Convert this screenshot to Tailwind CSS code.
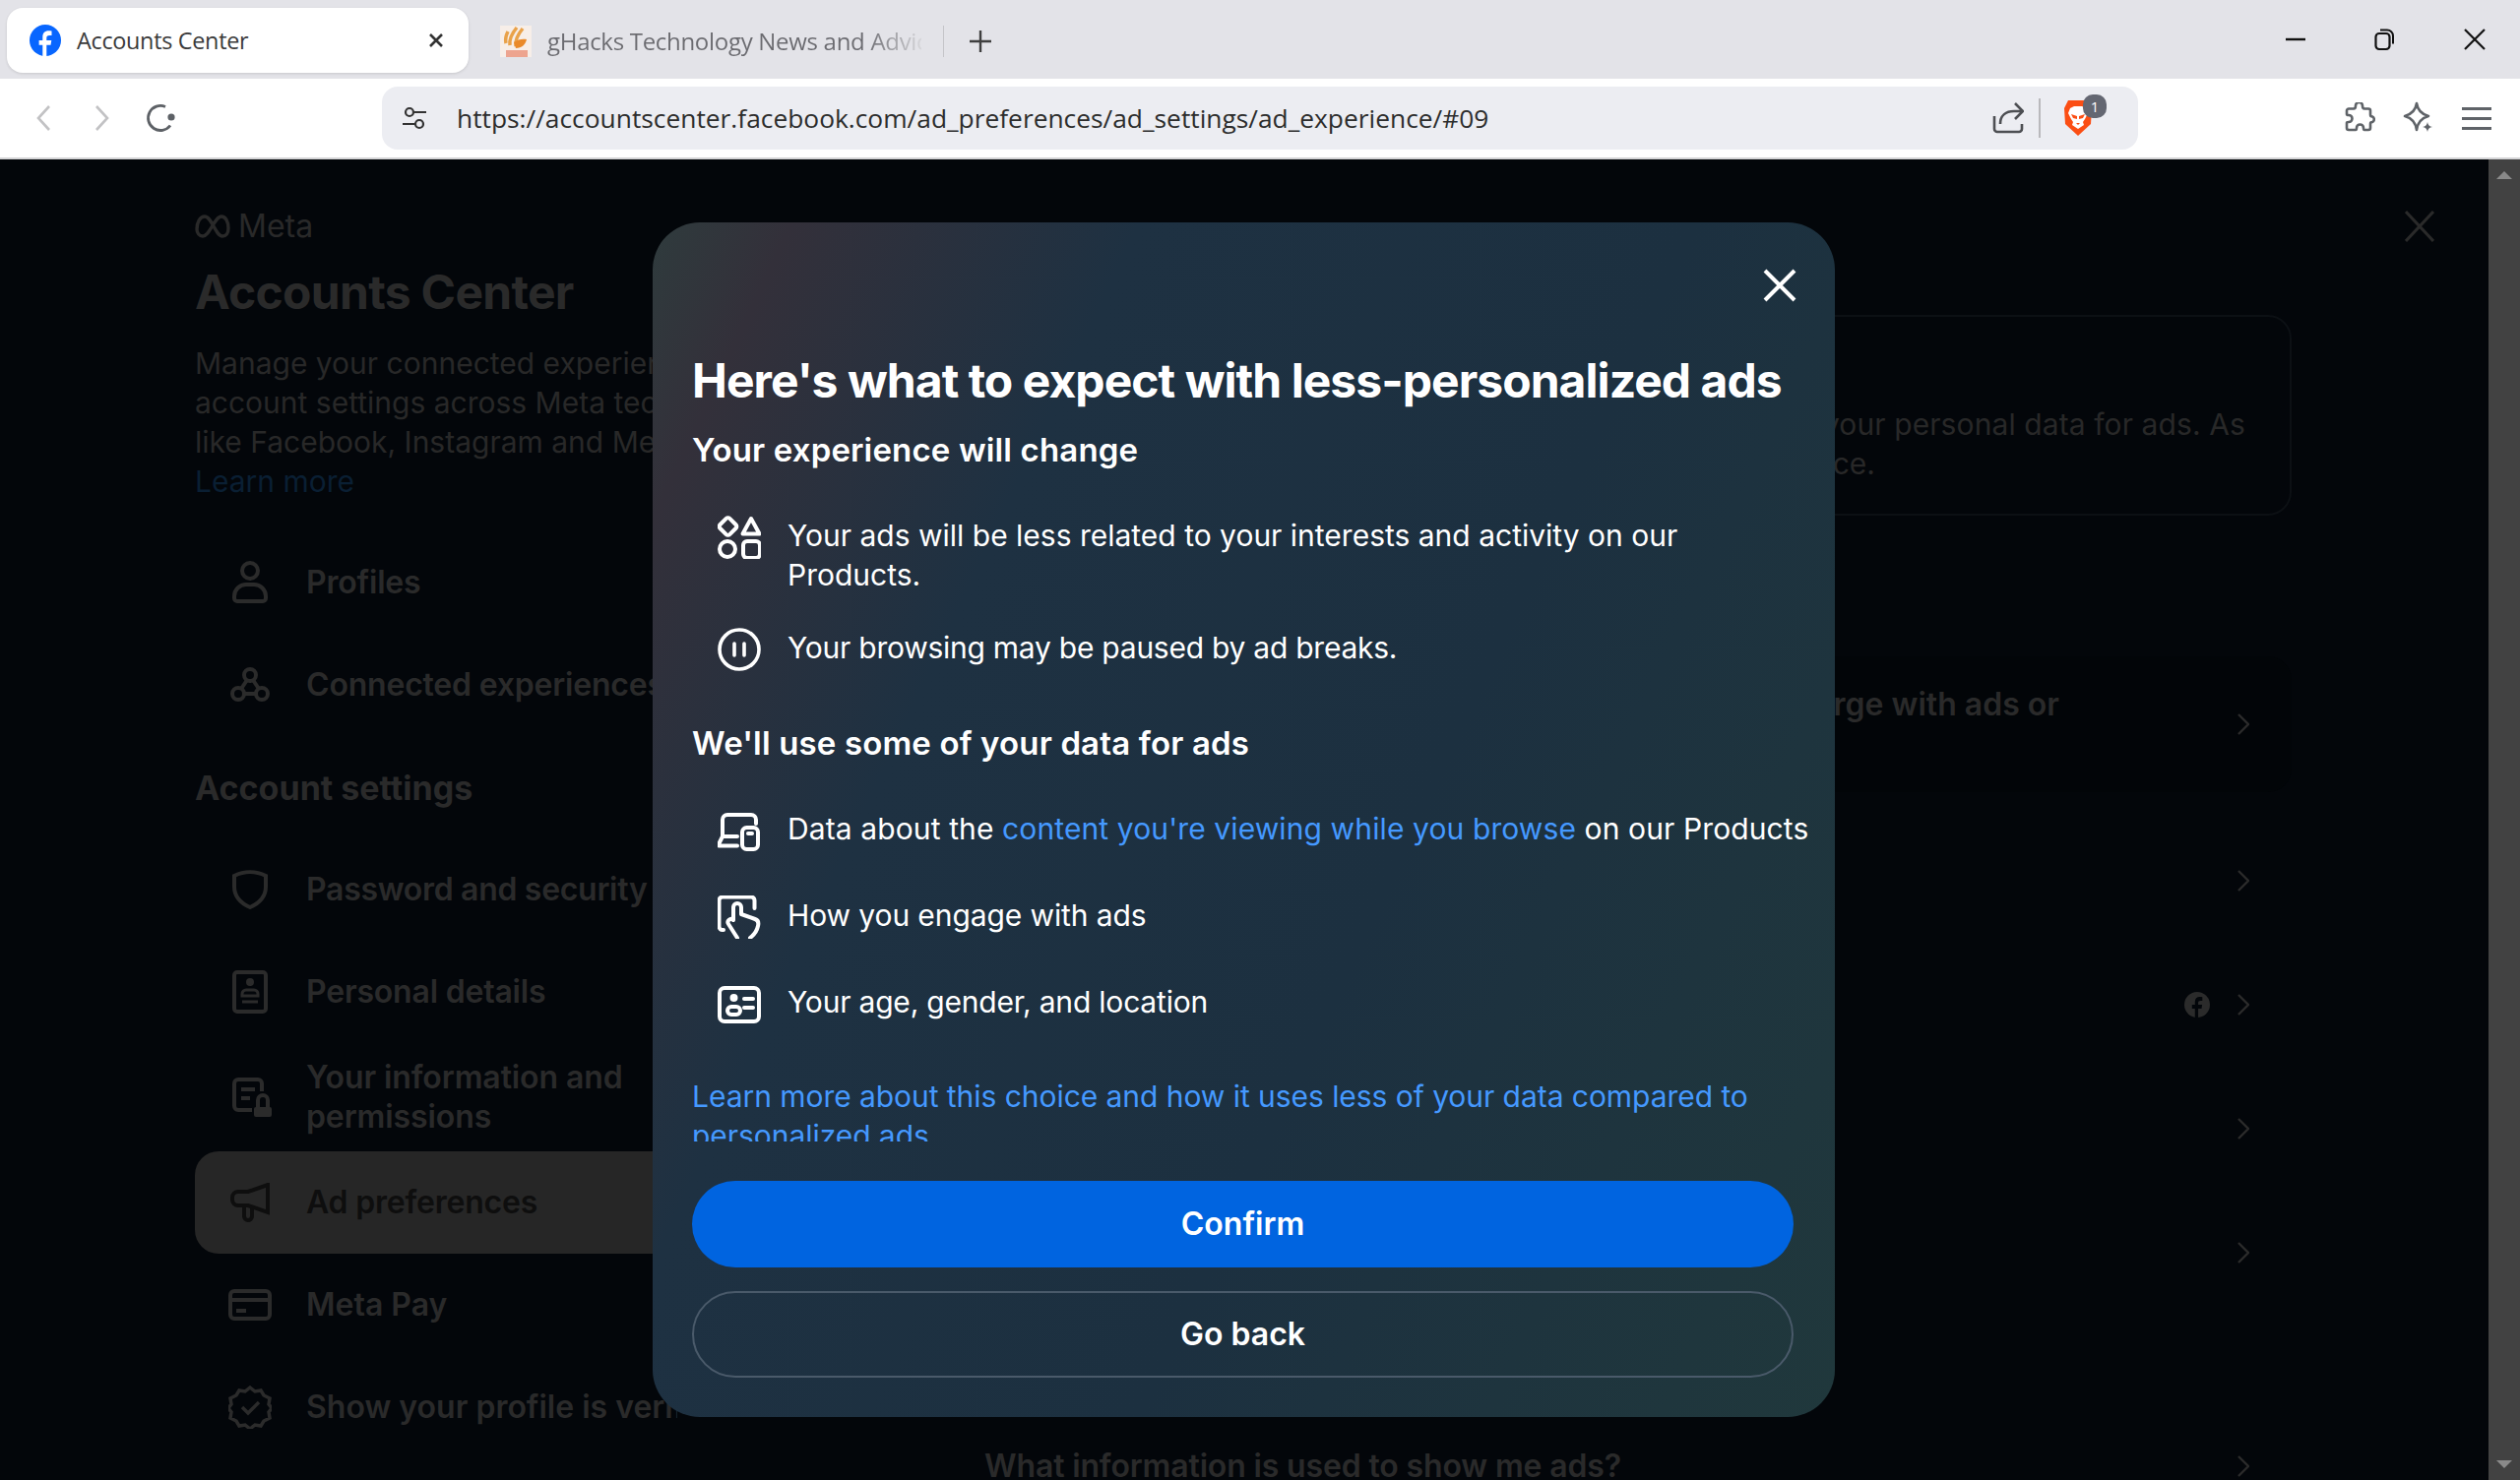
<!DOCTYPE html>
<html lang="en">
<head>
<meta charset="utf-8">
<title>Accounts Center</title>
<script src="https://cdn.jsdelivr.net/npm/@tailwindcss/browser@4"></script>
</head>
<body class="m-0 h-[1504px] w-[2560px] overflow-hidden bg-[#03060a] font-['Inter',sans-serif]">
<div class="relative flex h-[1504px] w-[2560px] flex-col overflow-hidden">
  <!-- tab strip -->
  <header class="flex h-20 shrink-0 items-start bg-[#e3e3e8] font-['Open_Sans',sans-serif]">
    <div class="ml-[7px] mt-2 flex h-[66px] w-[469px] items-center rounded-2xl bg-white pl-[23px] shadow-[0_1px_3px_rgba(0,0,0,0.12)]">
      <svg width="32" height="32" viewBox="0 0 32 32"><circle cx="16" cy="16" r="16" fill="#0866ff"/><path fill="#fff" d="M13.3 32V20.8H9.6V16h3.7v-3.2c0-4.3 2.1-6.5 6.2-6.500 1 0 2.200.1 3 .3v4.400h-2.200c-2.300 0-3 .9-3 2.900V16h5l-.8 4.800h-4.200V32z"/></svg>
      <span class="ml-4 text-[23.4px] leading-8 tracking-[-0.3px] text-[#3b3b3b]">Accounts Center</span>
      <svg class="ml-auto mr-[26px]" width="14" height="14" viewBox="0 0 14 14"><path d="M1 1l12 12M13 1L1 13" stroke="#333" stroke-width="2.6"/></svg>
    </div>
    <div class="ml-8 mt-[26px] flex h-8 items-center">
      <svg width="32" height="32" viewBox="0 0 32 32"><rect width="32" height="32" fill="#f7eee8"/><path d="M17 2C12 8 9 13 10 20M23 3c-5 6-8 11-7 18M8 6C6 10 5 14 6 18" stroke="#e9a24a" stroke-width="3.5" fill="none"/><path d="M14 17c4-3 9-4 13-3-1 5-5 9-11 9z" fill="#ea8a2a"/><path d="M6 25h22v7H6z" fill="#eda48f"/></svg>
      <span class="ml-4 w-[380px] overflow-hidden whitespace-nowrap bg-[linear-gradient(90deg,#6b6b70_85%,#d6d6da)] bg-clip-text text-[24px] leading-8 tracking-[-0.3px] text-transparent">gHacks Technology News and Advice</span>
      <div class="ml-[22px] h-8 w-px bg-[#c4c4c8]"></div>
      <svg class="ml-[25px]" width="24" height="24" viewBox="0 0 24 24"><path d="M12 1v22M1 12h22" stroke="#3f3f3f" stroke-width="2.4"/></svg>
    </div>
    <div class="ml-auto mt-[28px] flex items-center">
      <svg width="24" height="24" viewBox="0 0 24 24"><path d="M2 12h20" stroke="#111" stroke-width="2.4"/></svg>
      <svg class="ml-[66px]" width="24" height="24" viewBox="0 0 24 24"><rect x="3.5" y="6" width="14" height="16" rx="3.5" fill="none" stroke="#111" stroke-width="2.2"/><path d="M8 2.5h7a6 6 0 0 1 6 6v8" fill="none" stroke="#111" stroke-width="2"/></svg>
      <svg class="ml-[68px] mr-[34px]" width="24" height="24" viewBox="0 0 24 24"><path d="M2 2l20 20M22 2L2 22" stroke="#111" stroke-width="2.2"/></svg>
    </div>
  </header>
  <!-- toolbar -->
  <nav class="flex h-[82px] shrink-0 items-start border-b-2 border-[#d4d4d6] bg-white font-['Open_Sans',sans-serif]">
    <div class="flex h-20 w-[388px] shrink-0 items-center">
      <svg class="ml-[36px]" width="16" height="28" viewBox="0 0 16 28"><path d="M14 2L3 14l11 12" fill="none" stroke="#c2c2c4" stroke-width="2.6"/></svg>
      <svg class="ml-[44px]" width="16" height="28" viewBox="0 0 16 28"><path d="M2 2l11 12L2 26" fill="none" stroke="#c2c2c4" stroke-width="2.6"/></svg>
      <svg class="ml-[36px]" width="32" height="32" viewBox="0 0 32 32"><path d="M25 23.5A12.5 12.5 0 1 1 20 4.5" fill="none" stroke="#5d6166" stroke-width="2.8"/><circle cx="26" cy="15" r="3.6" fill="#5d6166"/></svg>
    </div>
    <div class="mt-2 flex h-16 w-[1784px] shrink-0 items-center rounded-2xl bg-[#ecedf2]">
      <svg class="ml-5" width="26" height="26" viewBox="0 0 26 26"><g fill="none" stroke="#333" stroke-width="2.2"><circle cx="8" cy="7" r="4"/><path d="M13 7h12M1 19h12"/><circle cx="18" cy="19" r="4"/></g></svg>
      <span class="ml-[30px] whitespace-nowrap text-[26.35px] leading-9 text-[#2d2d2d]">https://accountscenter.facebook.com/ad_preferences/ad_settings/ad_experience/#09</span>
      <svg class="ml-auto -mr-[2px]" width="32" height="32" viewBox="0 0 32 32"><path d="M2 14v13a3 3 0 0 0 3 3h22a3 3 0 0 0 3-3v-5M8 22c0-9 6-13 14-13h8M23 1l8 8-8 8" fill="none" stroke="#4d4f53" stroke-width="2.6"/></svg>
      <div class="ml-[17px] h-10 w-0.5 bg-[#b9b9bc]"></div>
      <div class="relative ml-[23px] mr-[46px] h-[36px] w-[30px]">
        <svg width="30" height="36" viewBox="0 0 30 36"><path fill="#fb4e14" d="M5 0h20l4 8-1 16-13 12L2 24 1 8z"/><path fill="#fff" d="M7 8l4-2h8l4 2 2 5-3 6-2 3 1 3-6 4-6-4 1-3-2-3-3-6z"/><path fill="#fb4e14" d="M8 14l6 2v3l-4-1zM22 14l-6 2v3l4-1zM13 23h4l-2 2z"/></svg>
        <span class="absolute -right-[14px] -top-[6px] flex h-6 w-6 items-center justify-center rounded-[10px] bg-[#646772] text-[15px] leading-none text-white">1</span>
      </div>
    </div>
    <div class="flex h-20 flex-1 items-center">
      <svg class="ml-[209px]" width="32" height="32" viewBox="0 0 32 32"><path d="M12 3.500a3.500 3.500 0 0 1 7 0c0 2 .6 3 2 3h4a2 2 0 0 1 2 2v4c0 1.400 1 2 2 2a3 3 0 0 1 0 5.500c-1 0-2 .6-2 2v4a2 2 0 0 1-2 2h-4c-1 0-1-1-1-2a3.500 3.500 0 0 0-7 0c0 1 0 2-1 2H5a2 2 0 0 1-2-2v-5c0-1 1-1 2-1a3.500 3.500 0 0 0 0-7c-1 0-2 0-2-1V8.500a2 2 0 0 1 2-2h5c1.400 0 2-1 2-3z" fill="none" stroke="#5f6368" stroke-width="2.600"/></svg>
      <svg class="ml-[28px]" width="32" height="34" viewBox="0 0 32 34"><path d="M14 2c1 7 5 11 12 13-7 2-11 6-12 14-1-8-5-12-12-14 7-2 11-6 12-13z" fill="none" stroke="#5f6368" stroke-width="2.600" stroke-linejoin="round"/><path d="M25 21c.5 3 2 4.500 5 5-3 .5-4.500 2-5 5-.5-3-2-4.500-5-5 3-.5 4.500-2 5-5z" fill="#5f6368"/></svg>
      <div class="ml-[28px] flex w-[30px] flex-col gap-[7px]">
        <div class="h-[3px] bg-[#5f6368]"></div><div class="h-[3px] bg-[#5f6368]"></div><div class="h-[3px] bg-[#5f6368]"></div>
      </div>
    </div>
  </nav>
  <!-- dimmed page beneath the dialog -->
  <main class="flex min-h-0 flex-1 bg-[#03060a]">
    <section class="w-[1000px] shrink-0 overflow-hidden pl-[198px] pt-[52px]">
      <div class="flex h-8 items-center gap-[8px]">
        <svg width="36" height="24" viewBox="0 0 36 24"><path d="M2 15C2 8 5 2 10 2c7 0 11 20 18 20 3.500 0 6-3 6-8 0-7-3-12-7-12-7 0-12 20-19 20-3.500 0-6-3-6-7z" fill="none" stroke="#292929" stroke-width="3.400"/></svg>
        <span class="text-[32px] leading-8 text-[#292929]">Meta</span>
      </div>
      <h1 class="mt-[23px] whitespace-nowrap text-[48px] font-bold leading-[56px] tracking-[-0.7px] text-[#2a2a2a]">Accounts Center</h1>
      <p class="mt-[24px] whitespace-nowrap text-[30px] leading-10 text-[#282828]">Manage your connected experiences and<br>account settings across Meta technologies<br>like Facebook, Instagram and Meta Horizon.<br><span class="text-[#0a1f33]">Learn more</span></p>
      <div class="mt-[31px] flex h-[104px] items-center text-[32px] font-semibold tracking-[-0.2px] text-[#2a2a2a]">
        <svg class="ml-[38px] w-9" width="36" height="44" viewBox="0 0 36 44"><g fill="none" stroke="#2b2b2b" stroke-width="4"><circle cx="18" cy="10" r="8"/><path d="M2 36a12 12 0 0 1 12-12h8a12 12 0 0 1 12 12v2a3 3 0 0 1-3 3H5a3 3 0 0 1-3-3z"/></g></svg>
        <span class="ml-[39px]">Profiles</span>
      </div>
      <div class="flex h-[104px] items-center text-[32px] font-semibold tracking-[-0.2px] text-[#2a2a2a]">
        <svg class="ml-[36px]" width="40" height="36" viewBox="0 0 40 36"><g fill="none" stroke="#2b2b2b" stroke-width="4"><circle cx="20" cy="8" r="6"/><circle cx="8" cy="27" r="6"/><circle cx="32" cy="27" r="6"/><path d="M17 13l-6 9M23 13l6 9M14 27h12"/></g></svg>
        <span class="ml-[37px] whitespace-nowrap">Connected experiences</span>
      </div>
      <div class="flex h-[104px] items-center text-[34px] font-bold text-[#2a2a2a]">Account settings</div>
      <div class="flex h-[104px] items-center text-[32px] font-semibold tracking-[-0.3px] text-[#2a2a2a]">
        <svg class="ml-[38px]" width="36" height="40" viewBox="0 0 36 40"><path d="M2 6c10-5 22-5 32 0v11c0 10-7 17-16 21C9 34 2 27 2 17z" fill="none" stroke="#2b2b2b" stroke-width="4"/></svg>
        <span class="ml-[39px] whitespace-nowrap">Password and security</span>
      </div>
      <div class="flex h-[104px] items-center text-[32px] font-semibold tracking-[-0.2px] text-[#2a2a2a]">
        <svg class="ml-[38px]" width="36" height="44" viewBox="0 0 36 44"><rect x="2" y="2" width="32" height="40" rx="3" fill="none" stroke="#2b2b2b" stroke-width="4"/><circle cx="18" cy="12" r="4" fill="#2b2b2b"/><path d="M10 24a4 4 0 0 1 4-4h8a4 4 0 0 1 4 4v2H10zM10 32h16" fill="none" stroke="#2b2b2b" stroke-width="3"/></svg>
        <span class="ml-[39px] whitespace-nowrap">Personal details</span>
      </div>
      <div class="flex h-[110px] items-center text-[32px] font-semibold leading-10 tracking-[-0.1px] text-[#2a2a2a]">
        <svg class="ml-[38px]" width="40" height="40" viewBox="0 0 40 40"><path d="M20 33H6a4 4 0 0 1-4-4V6a4 4 0 0 1 4-4h20a4 4 0 0 1 4 4v8M9 12h14M9 21h9" fill="none" stroke="#2b2b2b" stroke-width="4"/><rect x="22" y="30" width="18" height="10" rx="2" fill="#2b2b2b"/><path d="M26 30v-7a5 5 0 0 1 10 0v7" fill="none" stroke="#2b2b2b" stroke-width="4"/></svg>
        <span class="ml-[35px] whitespace-nowrap">Your information and<br>permissions</span>
      </div>
      <div class="flex h-[104px] w-[600px] items-center rounded-l-3xl bg-[#262626] text-[32px] font-semibold tracking-[-0.2px] text-[#0e0e0e]">
        <svg class="ml-[36px]" width="42" height="40" viewBox="0 0 42 40"><path d="M2 15a6 6 0 0 1 6-6h10l20-7v28l-20-7H8a6 6 0 0 1-6-6zM14 23v11a4 4 0 0 0 8 0V23" fill="none" stroke="#0e0e0e" stroke-width="4"/></svg>
        <span class="ml-[35px] whitespace-nowrap">Ad preferences</span>
      </div>
      <div class="flex h-[104px] items-center text-[32px] font-semibold text-[#2a2a2a]">
        <svg class="ml-[34px]" width="44" height="32" viewBox="0 0 44 32"><rect x="2" y="2" width="40" height="28" rx="4" fill="none" stroke="#2b2b2b" stroke-width="4"/><path d="M2 11h40M8 22h10" stroke="#2b2b2b" stroke-width="4"/></svg>
        <span class="ml-[35px] whitespace-nowrap">Meta Pay</span>
      </div>
      <div class="flex h-[104px] w-[490px] items-center overflow-hidden text-[32px] font-semibold text-[#2a2a2a]">
        <svg class="ml-[34px] shrink-0" width="44" height="44" viewBox="0 0 44 44"><path d="M22 2l5 4 6-1 3 5 6 3-1 6 3 4-3 4 1 6-6 3-3 5-6-1-5 4-5-4-6 1-3-5-6-3 1-6-3-4 3-4-1-6 6-3 3-5 6 1z" fill="none" stroke="#2b2b2b" stroke-width="3.500"/><path d="M14 22l6 6 11-11" fill="none" stroke="#2b2b2b" stroke-width="3.500"/></svg>
        <span class="ml-[35px] whitespace-nowrap">Show your profile is verified</span>
      </div>
    </section>
    <section class="flex-1 pt-[52px] text-[#2a2a2a]">
      <div class="flex h-8 justify-end pr-[55px]">
        <svg width="30" height="32" viewBox="0 0 30 32"><path d="M1 1l28 30M29 1L1 31" stroke="#2a2a2a" stroke-width="3"/></svg>
      </div>
      <div class="ml-[40px] mt-[74px] h-[204px] w-[1288px] rounded-3xl border-2 border-[#0c1014] pt-[89px] text-right text-[30px] leading-10 text-[#282828]">
        <p class="whitespace-nowrap pr-[45px] tracking-[0.1px]">your personal data for ads. As</p>
        <p class="pr-[421px]">ce.</p>
      </div>
      <div class="ml-[40px] mt-[143px] flex h-[138px] w-[1288px] items-center justify-end rounded-3xl bg-[#020508] pr-[43px] text-[32px] font-semibold leading-10">
        <p class="mr-[181px] whitespace-nowrap">rge with ads or<br>&nbsp;</p>
        <svg width="12" height="22" viewBox="0 0 12 22"><path d="M1 1l10 10L1 21" fill="none" stroke="#2b2b2b" stroke-width="2.400"/></svg>
      </div>
      <div class="ml-[40px] mt-[27px] flex h-[126px] w-[1288px] items-center justify-end pr-[43px]">
        <svg width="12" height="22" viewBox="0 0 12 22"><path d="M1 1l10 10L1 21" fill="none" stroke="#2b2b2b" stroke-width="2.400"/></svg>
      </div>
      <div class="ml-[40px] flex h-[126px] w-[1288px] items-center justify-end pr-[43px]">
        <svg class="mr-[28px]" width="26" height="26" viewBox="0 0 32 32"><circle cx="16" cy="16" r="16" fill="#2b2b2b"/><path fill="#03060a" d="M13.300 32V20.800H9.600V16h3.700v-3.200c0-4.300 2.100-6.500 6.200-6.500 1 0 2.200.1 3 .3v4.400h-2.200c-2.300 0-3 .9-3 2.900V16h5l-.8 4.800h-4.200V32z"/></svg>
        <svg width="12" height="22" viewBox="0 0 12 22"><path d="M1 1l10 10L1 21" fill="none" stroke="#2b2b2b" stroke-width="2.400"/></svg>
      </div>
      <div class="ml-[40px] flex h-[126px] w-[1288px] items-center justify-end pr-[43px]">
        <svg width="12" height="22" viewBox="0 0 12 22"><path d="M1 1l10 10L1 21" fill="none" stroke="#2b2b2b" stroke-width="2.400"/></svg>
      </div>
      <div class="ml-[40px] flex h-[126px] w-[1288px] items-center justify-end pr-[43px]">
        <svg width="12" height="22" viewBox="0 0 12 22"><path d="M1 1l10 10L1 21" fill="none" stroke="#2b2b2b" stroke-width="2.400"/></svg>
      </div>
      <div class="mt-[134px] flex h-10 w-[1328px] items-center justify-between pr-[43px] text-[32px] font-semibold leading-10 tracking-[-0.15px]">
        <p class="whitespace-nowrap">What information is used to show me ads?</p>
        <svg width="12" height="22" viewBox="0 0 12 22"><path d="M1 1l10 10L1 21" fill="none" stroke="#2b2b2b" stroke-width="2.400"/></svg>
      </div>
    </section>
    <aside class="flex w-8 shrink-0 flex-col items-center justify-between bg-[#424242] py-3">
      <div class="h-0 w-0 border-x-[8px] border-b-[8px] border-x-transparent border-b-[#8a8a8a]"></div>
      <div class="h-0 w-0 border-x-[8px] border-t-[8px] border-x-transparent border-t-[#8a8a8a]"></div>
    </aside>
  </main>
  <!-- dialog -->
  <div role="dialog" class="absolute left-[663px] top-[226px] z-10 flex h-[1214px] w-[1201px] flex-col overflow-hidden rounded-[48px] bg-[linear-gradient(115deg,#2f3b3d_0%,#33303a_8%,#1e3142_28%,#1c3040_60%,#20383c_100%)] px-10 pb-10 text-white">
    <svg class="absolute right-[39px] top-[47px]" width="34" height="34" viewBox="0 0 34 34"><path d="M2 2l30 30M32 2L2 32" stroke="#fff" stroke-width="4"/></svg>
    <div class="-mr-10 h-[934px] shrink-0 overflow-hidden pr-10 pt-[133px]">
      <h2 class="whitespace-nowrap text-[48px] font-bold leading-[56px] tracking-[-0.95px]">Here's what to expect with less-personalized ads</h2>
      <h3 class="mt-[22px] text-[33px] font-semibold leading-10 tracking-[0.15px]">Your experience will change</h3>
      <div class="mt-[47px] flex items-start">
        <svg class="ml-[26px] shrink-0" width="44" height="44" viewBox="0 0 44 44"><g fill="none" stroke="#fff" stroke-width="4" stroke-linejoin="round"><rect x="3.500" y="4" width="14" height="14" rx="2.500" transform="rotate(45 10.500 11)"/><path d="M34 3l8.500 15.500H25.500z"/><circle cx="10" cy="34" r="8"/><rect x="26" y="26" width="17" height="17" rx="4"/></g></svg>
        <p class="ml-[27px] w-[1000px] text-[30px] leading-10">Your ads will be less related to your interests and activity on our<br>Products.</p>
      </div>
      <div class="mt-[34px] flex h-10 items-start">
        <svg class="ml-[26px] shrink-0" width="44" height="44" viewBox="0 0 44 44"><circle cx="22" cy="22" r="20" fill="none" stroke="#fff" stroke-width="3.600"/><path d="M17 16v12M27 16v12" stroke="#fff" stroke-width="3.600" stroke-linecap="round"/></svg>
        <p class="ml-[27px] text-[30px] leading-10 tracking-[-0.25px]">Your browsing may be paused by ad breaks.</p>
      </div>
      <h3 class="mt-[57px] text-[33px] font-semibold leading-10 tracking-[0.15px]">We'll use some of your data for ads</h3>
      <div class="mt-[47px] flex h-10 items-start">
        <svg class="ml-[26px] mt-1 shrink-0" width="44" height="40" viewBox="0 0 44 40"><g fill="none" stroke="#fff" stroke-width="4" stroke-linecap="round" stroke-linejoin="round"><path d="M5 24V7a5 5 0 0 1 5-5h24a5 5 0 0 1 5 5v4M5 24h15M5 24l-4 8a1 1 0 0 0 1 1.500h18"/><rect x="25" y="15" width="16" height="22" rx="4.500"/><path d="M31 21h4"/></g></svg>
        <p class="ml-[27px] whitespace-nowrap text-[30px] leading-10 tracking-[0.11px]">Data about the <span class="text-[#4599ff]">content you're viewing while you browse</span> on our Products</p>
      </div>
      <div class="mt-12 flex h-10 items-start">
        <svg class="ml-[26px] shrink-0" width="44" height="44" viewBox="0 0 44 44"><g fill="none" stroke="#fff" stroke-width="4" stroke-linecap="round" stroke-linejoin="round"><path d="M6 35H5a3.500 3.500 0 0 1-3.500-3.500V5A3.500 3.500 0 0 1 5 1.500h29A3.500 3.500 0 0 1 37.500 5v8"/><path d="M20 43l-9-14c-2-3 2-7 5-4V12a4 4 0 0 1 8 0v7l14 5c3 1 4 3 3 7-1 5-4 9-8 12"/></g></svg>
        <p class="ml-[27px] text-[30px] leading-10 tracking-[-0.1px]">How you engage with ads</p>
      </div>
      <div class="mt-12 flex h-10 items-start">
        <svg class="ml-[26px] mt-1 shrink-0" width="44" height="38" viewBox="0 0 44 38"><g fill="none" stroke="#fff" stroke-width="4"><rect x="2" y="2" width="40" height="34" rx="5"/><rect x="10" y="21" width="13" height="8" rx="4"/><path d="M27 13h9M27 22h9" stroke-linecap="round"/></g><circle cx="16.500" cy="12" r="4" fill="#fff"/></svg>
        <p class="ml-[27px] text-[30px] leading-10 tracking-[-0.2px]">Your age, gender, and location</p>
      </div>
      <p class="mt-[56px] text-[30px] leading-10 tracking-[-0.05px] text-[#4599ff]">Learn more about this choice and how it uses less of your data compared to<br>personalized ads</p>
    </div>
    <button class="mr-[2px] mt-10 flex h-[88px] shrink-0 items-center justify-center rounded-full bg-[#0064e0] text-[32px] font-semibold text-white">Confirm</button>
    <button class="mr-[2px] mt-6 flex h-[88px] shrink-0 items-center justify-center rounded-full border-2 border-[#4a5a6a] text-[32px] font-semibold text-white">Go back</button>
  </div>
</div>
</body>
</html>
